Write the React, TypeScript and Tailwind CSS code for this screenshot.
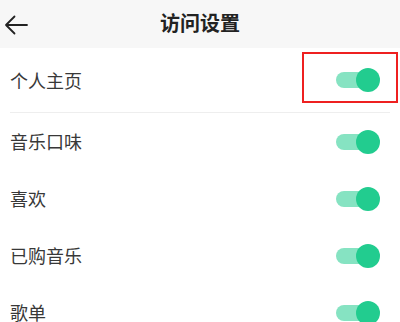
const rows = ["音乐口味", "喜欢", "已购音乐", "歌单"];

function Toggle() {
  return (
    <div className="relative w-[44px] h-[24px] flex items-center">
      <div className="w-[40px] h-[16px] rounded-full bg-[#86e3c2]" />
      <div className="absolute right-0 top-0 w-[24px] h-[24px] rounded-full bg-[#22cc8f]" />
    </div>
  );
}

export default function App() {
  return (
    <div
      className="w-[400px] h-[322px] overflow-hidden bg-white text-[#383838]"
      style={{ fontFamily: '"Noto Sans CJK SC", "Noto Sans", sans-serif' }}
    >
      {/* header */}
      <div className="relative h-[48px] bg-[#f7f7f7] flex items-center justify-center">
        <svg className="absolute left-0 top-0" width="34" height="48" viewBox="0 0 34 48" fill="none">
          <path d="M6 25 H27 M14.5 16.5 L6 25 L14.5 33.5" stroke="#222" strokeWidth="1.8" strokeLinecap="round" strokeLinejoin="round" />
        </svg>
        <h1 className="text-[20px] font-bold text-[#222] -mt-[2px]">访问设置</h1>
      </div>

      {/* first row */}
      <div className="h-[64px] flex items-center justify-between pl-[10px] pr-[20px]">
        <span className="text-[18px]">个人主页</span>
        <div className="relative">
          <Toggle />
          <div className="absolute -left-[34px] -top-[16px] w-[96px] h-[51px] border-2 border-[#ee2020]" />
        </div>
      </div>
      <div className="mx-[10px] h-px bg-[#eeeeee]" />

      {rows.map((r) => (
        <div key={r} className="h-[57px] flex items-center justify-between pl-[10px] pr-[20px]">
          <span className="text-[18px]">{r}</span>
          <Toggle />
        </div>
      ))}
    </div>
  );
}
